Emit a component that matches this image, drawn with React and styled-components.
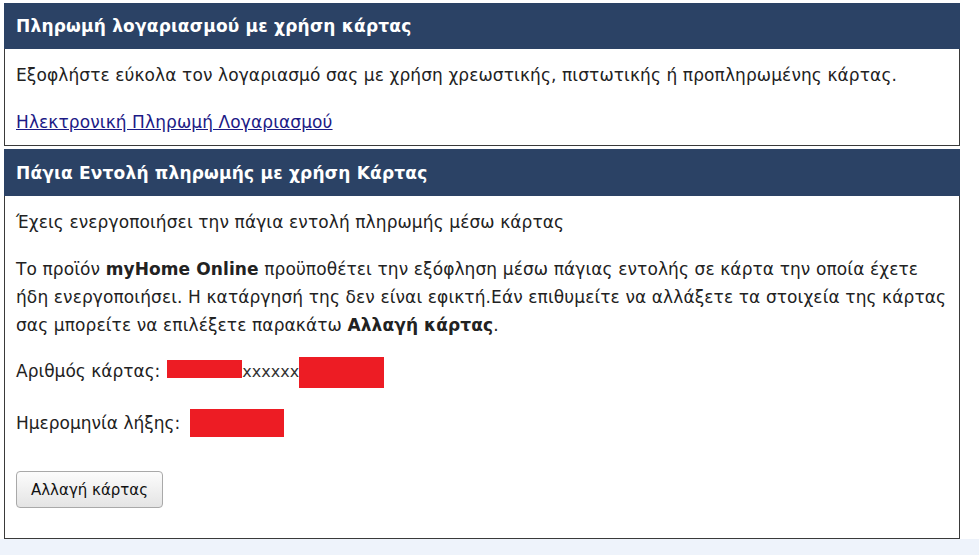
import React from "react";
import styled, { createGlobalStyle } from "styled-components";

const Global = createGlobalStyle`
  html, body { margin: 0; padding: 0; background: #ffffff; }
  body { font-family: "DejaVu Sans", Verdana, sans-serif; font-size: 17px; color: #222; }
`;

const Page = styled.div`
  width: 979px;
  height: 555px;
  display: flex;
  flex-direction: column;
  background: #fff;
`;

const Main = styled.div`
  padding: 3px 19px 0 4px;
  display: flex;
  flex-direction: column;
  gap: 3px;
`;

const Footer = styled.div`
  flex: 1;
  background: #eef3fb;
`;

const Panel = styled.section`
  display: flex;
  flex-direction: column;
`;

const Header = styled.h2`
  margin: 0;
  height: ${(p) => p.h}px;
  background: #2b4265;
  color: #fff;
  font-size: 17px;
  font-weight: bold;
  letter-spacing: 0.2px;
  display: flex;
  align-items: center;
  padding-left: 12px;
`;

const Body = styled.div`
  border: 1px solid #3a3a3a;
  border-top: none;
  padding: ${(p) => p.pad};
  background: #fff;
`;

const Text = styled.p`
  margin: 0 0 ${(p) => p.mb ?? 20}px;
  line-height: 28px;
  letter-spacing: 0.1px;
`;

const Link = styled.a`
  color: #1c1a86;
  text-decoration: underline;
`;

const Row = styled.div`
  display: flex;
  align-items: center;
  height: 28px;
  margin-bottom: ${(p) => p.mb}px;
`;

const Redact = styled.span`
  display: inline-block;
  background: #ed1c24;
  width: ${(p) => p.w}px;
  height: ${(p) => p.h}px;
  margin-left: ${(p) => p.ml || 0}px;
  margin-top: ${(p) => p.mt || 0}px;
`;

const Masked = styled.span`
  font-size: 16px;
  color: #333;
`;

const Button = styled.button`
  font-family: "DejaVu Sans", Verdana, sans-serif;
  font-size: 15px;
  color: #111;
  width: 147px;
  height: 37px;
  border: 1px solid #a9a9a9;
  border-radius: 4px;
  background: linear-gradient(#fcfcfc, #e4e4e4);
  padding: 0;
`;

export default function App() {
  return (
    <Page>
      <Global />
      <Main>
        <Panel>
          <Header h={46}>Πληρωμή λογαριασμού με χρήση κάρτας</Header>
          <Body pad="12px 11px 9px">
            <Text mb={19}>
              Εξοφλήστε εύκολα τον λογαριασμό σας με χρήση χρεωστικής, πιστωτικής ή προπληρωμένης κάρτας.
            </Text>
            <Text mb={0}>
              <Link href="#">Ηλεκτρονική Πληρωμή Λογαριασμού</Link>
            </Text>
          </Body>
        </Panel>
        <Panel>
          <Header h={47}>Πάγια Εντολή πληρωμής με χρήση Κάρτας</Header>
          <Body pad="12px 11px 30px">
            <Text mb={19}>Έχεις ενεργοποιήσει την πάγια εντολή πληρωμής μέσω κάρτας</Text>
            <Text mb={18}>
              Το προϊόν <b>myHome Online</b> προϋποθέτει την εξόφληση μέσω πάγιας εντολής σε κάρτα την οποία έχετε
              ήδη ενεργοποιήσει. Η κατάργησή της δεν είναι εφικτή.Εάν επιθυμείτε να αλλάξετε τα στοιχεία της κάρτας
              σας μπορείτε να επιλέξετε παρακάτω <b>Αλλαγή κάρτας</b>.
            </Text>
            <Row mb={24}>
              Αριθμός κάρτας:
              <Redact w={75} h={18} ml={7} mt={-4} />
              <Masked>xxxxxx</Masked>
              <Redact w={85} h={31} mt={3} />
            </Row>
            <Row mb={34}>
              Ημερομηνία λήξης:
              <Redact w={94} h={28} ml={10} />
            </Row>
            <Button>Αλλαγή κάρτας</Button>
          </Body>
        </Panel>
      </Main>
      <Footer />
    </Page>
  );
}
